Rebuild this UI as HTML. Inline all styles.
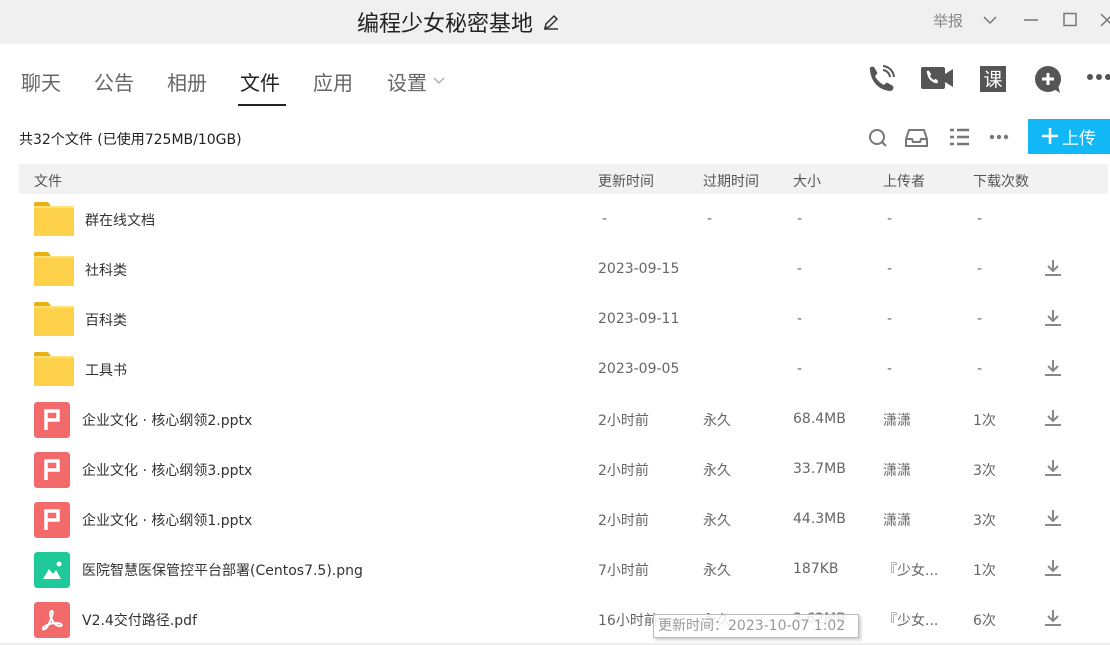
<!DOCTYPE html>
<html><head><meta charset="utf-8"><style>
*{margin:0;padding:0;box-sizing:border-box}
body{width:1110px;height:645px;overflow:hidden;background:#fff;font-family:"DejaVu Sans","Noto Sans CJK SC",sans-serif;position:relative;color:#333}
.a{position:absolute;white-space:nowrap}
.top{position:absolute;left:0;top:0;width:1110px;height:44px;background:#f0f0f0}
.tab{position:absolute;top:69px;font-size:20px;color:#666;font-family:"Noto Sans CJK SC",sans-serif;line-height:26px}
.hdr{position:absolute;left:19px;top:164px;width:1089px;height:30px;background:#f2f2f2;font-size:14px;color:#555}
.row{position:absolute;left:0;width:1110px;height:50px;font-size:14px;color:#333}
.row .c{position:absolute;top:17px;color:#666}
.fold{position:absolute;left:34px;top:8px;width:40px;height:34px}
.ic{position:absolute;left:34px;top:8px;width:36px;height:36px;border-radius:3px}
.dl{position:absolute;left:1044px;top:15px}
</style></head><body>
<div class="top"></div>
<div class="a" style="left:357px;top:7px;font-size:22px;color:#222;font-family:'Noto Sans CJK SC',sans-serif;line-height:30px">编程少女秘密基地</div>
<svg class="a" style="left:542px;top:13px" width="18" height="18" viewBox="0 0 18 18"><path d="M3 15 L4 11 L12 3 L15 6 L7 14 Z M2 16 H16" fill="none" stroke="#333" stroke-width="1.5"/></svg>
<div class="a" style="left:933px;top:10px;font-size:15px;color:#888;font-family:'Noto Sans CJK SC',sans-serif">举报</div>
<svg class="a" style="left:982px;top:12px" width="128" height="16" viewBox="0 0 128 16"><path d="M2 5 L8 11 L14 5" fill="none" stroke="#777" stroke-width="1.5"/><path d="M42 8 H56" stroke="#777" stroke-width="1.5"/><rect x="82" y="1.5" width="12" height="12" fill="none" stroke="#777" stroke-width="1.5"/><path d="M119 2 L131 14 M131 2 L119 14" stroke="#777" stroke-width="1.5"/></svg>

<div class="tab" style="left:21px">聊天</div>
<div class="tab" style="left:94px">公告</div>
<div class="tab" style="left:167px">相册</div>
<div class="tab" style="left:240px;color:#222">文件</div>
<div class="a" style="left:238px;top:104px;width:48px;height:2px;background:#222"></div>
<div class="tab" style="left:313px">应用</div>
<div class="tab" style="left:387px">设置</div>
<svg class="a" style="left:432px;top:76px" width="14" height="10"><path d="M2 2 L7 7 L12 2" fill="none" stroke="#aaa" stroke-width="1.3"/></svg>

<svg class="a" style="left:866px;top:64px" width="30" height="30" viewBox="0 0 30 30"><path d="M4 6 C3 3 6 2 8 3 L11 8 C12 10 10 11 9 12 C11 16 14 19 18 21 C19 20 20 18 22 19 L27 22 C28 24 27 27 24 27 C13 26 5 18 4 6Z" fill="#555"/><path d="M17 6 A8 8 0 0 1 24 13 M17 2 A12 12 0 0 1 28 13" fill="none" stroke="#555" stroke-width="2"/></svg>
<svg class="a" style="left:921px;top:66px" width="32" height="24" viewBox="0 0 32 24"><rect x="0" y="1" width="24" height="22" rx="2" fill="#555"/><path d="M24 8 L32 3 V21 L24 16Z" fill="#555"/><path d="M6 7 C5 5 7 4 8 5 L10 8 C10 9 9 10 9 10 C10 12 11 13 13 14 C13 14 14 13 15 13 L17 15 C17 17 16 18 14 17 C9 15 7 12 6 7Z" fill="#fff"/></svg>
<div class="a" style="left:980px;top:66px;width:26px;height:26px;background:#555;color:#fff;font-size:19px;line-height:26px;text-align:center;font-family:'Noto Sans CJK SC',sans-serif">课</div>
<svg class="a" style="left:1034px;top:65px" width="30" height="30" viewBox="0 0 30 30"><circle cx="14" cy="14" r="13" fill="#555"/><path d="M20 24 L26 28 L24 20Z" fill="#555"/><path d="M14 8 V20 M8 14 H20" stroke="#fff" stroke-width="3"/></svg>
<svg class="a" style="left:1086px;top:72px" width="24" height="10"><circle cx="4" cy="5" r="3" fill="#555"/><circle cx="13" cy="5" r="3" fill="#555"/><circle cx="22" cy="5" r="3" fill="#555"/></svg>

<div class="a" style="left:19px;top:129px;font-size:14px;color:#222">共32个文件 (已使用725MB/10GB)</div>
<svg class="a" style="left:866px;top:127px" width="150" height="22" viewBox="0 0 150 22"><circle cx="11" cy="10" r="7" fill="none" stroke="#777" stroke-width="2"/><path d="M16 15 L20 19" stroke="#777" stroke-width="2"/><path d="M43 3 H58 L61 12 V19 H40 V12 Z M40 12 H46 L47 15 H54 L55 12 H61" fill="none" stroke="#777" stroke-width="2"/><path d="M84 3 H88 M91 3 H103 M84 10 H88 M91 10 H103 M84 17 H88 M91 17 H103" stroke="#777" stroke-width="2.5"/><circle cx="126" cy="10" r="2.2" fill="#777"/><circle cx="133" cy="10" r="2.2" fill="#777"/><circle cx="140" cy="10" r="2.2" fill="#777"/></svg>
<div class="a" style="left:1028px;top:119px;width:82px;height:35px;background:#12b7f5"></div>
<svg class="a" style="left:1042px;top:128px" width="16" height="16"><path d="M8 0 V16 M0 8 H16" stroke="#fff" stroke-width="2.5"/></svg>
<div class="a" style="left:1062px;top:125px;font-size:17px;color:#fff;font-family:'Noto Sans CJK SC',sans-serif;line-height:24px">上传</div>

<div class="hdr">
<span class="a" style="left:15px;top:7px">文件</span>
<span class="a" style="left:579px;top:7px">更新时间</span>
<span class="a" style="left:684px;top:7px">过期时间</span>
<span class="a" style="left:774px;top:7px">大小</span>
<span class="a" style="left:864px;top:7px">上传者</span>
<span class="a" style="left:954px;top:7px">下载次数</span>
</div>

<svg width="0" height="0" style="position:absolute"><defs>
<symbol id="f" viewBox="0 0 40 34"><path d="M0 2 Q0 0 2 0 H14 L17 4 H0Z" fill="#e8b10f"/><rect x="0" y="4" width="40" height="30" fill="#fdd14a"/><rect x="0" y="4" width="40" height="2" fill="#fde07a"/></symbol>
<symbol id="d" viewBox="0 0 18 18"><path d="M9 1 V11 M4 7 L9 12 L14 7 M1 16 H17" fill="none" stroke="#888" stroke-width="2"/></symbol>
<symbol id="p" viewBox="0 0 36 36"><rect width="36" height="36" rx="3" fill="#f36a6a"/><path d="M12 28 V9 H24 V18 H12" fill="none" stroke="#fff" stroke-width="3.5"/></symbol>
</defs></svg>

<div class="row" style="top:194px"><svg class="fold" viewBox="0 0 40 34"><use href="#f"/></svg><span class="a" style="left:85px;top:16px">群在线文档</span><span class="c" style="left:602px">-</span><span class="c" style="left:707px">-</span><span class="c" style="left:797px">-</span><span class="c" style="left:887px">-</span><span class="c" style="left:977px">-</span></div>
<div class="row" style="top:244px"><svg class="fold" viewBox="0 0 40 34"><use href="#f"/></svg><span class="a" style="left:85px;top:16px">社科类</span><span class="c" style="left:598px">2023-09-15</span><span class="c" style="left:797px">-</span><span class="c" style="left:887px">-</span><span class="c" style="left:977px">-</span><svg class="dl" width="18" height="18"><use href="#d"/></svg></div>
<div class="row" style="top:294px"><svg class="fold" viewBox="0 0 40 34"><use href="#f"/></svg><span class="a" style="left:85px;top:16px">百科类</span><span class="c" style="left:598px">2023-09-11</span><span class="c" style="left:797px">-</span><span class="c" style="left:887px">-</span><span class="c" style="left:977px">-</span><svg class="dl" width="18" height="18"><use href="#d"/></svg></div>
<div class="row" style="top:344px"><svg class="fold" viewBox="0 0 40 34"><use href="#f"/></svg><span class="a" style="left:85px;top:16px">工具书</span><span class="c" style="left:598px">2023-09-05</span><span class="c" style="left:797px">-</span><span class="c" style="left:887px">-</span><span class="c" style="left:977px">-</span><svg class="dl" width="18" height="18"><use href="#d"/></svg></div>
<div class="row" style="top:394px"><svg class="ic" viewBox="0 0 36 36"><use href="#p"/></svg><span class="a" style="left:82px;top:16px">企业文化 · 核心纲领2.pptx</span><span class="c" style="left:598px;top:16px">2小时前</span><span class="c" style="left:703px;top:16px">永久</span><span class="c" style="left:793px">68.4MB</span><span class="c" style="left:883px;top:16px">潇潇</span><span class="c" style="left:973px;top:16px">1次</span><svg class="dl" width="18" height="18"><use href="#d"/></svg></div>
<div class="row" style="top:444px"><svg class="ic" viewBox="0 0 36 36"><use href="#p"/></svg><span class="a" style="left:82px;top:16px">企业文化 · 核心纲领3.pptx</span><span class="c" style="left:598px;top:16px">2小时前</span><span class="c" style="left:703px;top:16px">永久</span><span class="c" style="left:793px">33.7MB</span><span class="c" style="left:883px;top:16px">潇潇</span><span class="c" style="left:973px;top:16px">3次</span><svg class="dl" width="18" height="18"><use href="#d"/></svg></div>
<div class="row" style="top:494px"><svg class="ic" viewBox="0 0 36 36"><use href="#p"/></svg><span class="a" style="left:82px;top:16px">企业文化 · 核心纲领1.pptx</span><span class="c" style="left:598px;top:16px">2小时前</span><span class="c" style="left:703px;top:16px">永久</span><span class="c" style="left:793px">44.3MB</span><span class="c" style="left:883px;top:16px">潇潇</span><span class="c" style="left:973px;top:16px">3次</span><svg class="dl" width="18" height="18"><use href="#d"/></svg></div>
<div class="row" style="top:544px"><svg class="ic" viewBox="0 0 36 36"><rect width="36" height="36" rx="3" fill="#1fc99a"/><path d="M9 27 L15 17 L19 22 L22 18 L27 27Z" fill="#fff"/><circle cx="25" cy="12" r="2.5" fill="#fff"/></svg><span class="a" style="left:82px;top:16px">医院智慧医保管控平台部署(Centos7.5).png</span><span class="c" style="left:598px;top:16px">7小时前</span><span class="c" style="left:703px;top:16px">永久</span><span class="c" style="left:793px">187KB</span><span class="c" style="left:883px;top:16px">『少女...</span><span class="c" style="left:973px;top:16px">1次</span><svg class="dl" width="18" height="18"><use href="#d"/></svg></div>
<div class="row" style="top:594px"><svg class="ic" viewBox="0 0 36 36"><rect width="36" height="36" rx="3" fill="#f36a6a"/><path d="M18 9 C15 9 16 14 18 18 C20 22 24 25 27 24 C29 23 27 21 22 21 C16 21 10 24 9 26 C8 28 11 28 13 25 C15 22 17 17 18 14 C19 11 19 9 18 9Z" fill="none" stroke="#fff" stroke-width="2"/></svg><span class="a" style="left:82px;top:16px">V2.4交付路径.pdf</span><span class="c" style="left:598px;top:16px">16小时前</span><span class="c" style="left:703px;top:16px">永久</span><span class="c" style="left:793px">3.62MB</span><span class="c" style="left:883px;top:16px">『少女...</span><span class="c" style="left:973px;top:16px">6次</span><svg class="dl" width="18" height="18"><use href="#d"/></svg></div>
<div class="a" style="left:0;top:643px;width:1110px;height:2px;background:#eee"></div>
<div class="a" style="left:653px;top:614px;width:206px;height:24px;background:rgba(255,255,255,0.85);border:1px solid #bbb;box-shadow:2px 2px 3px rgba(0,0,0,.2);font-size:14px;color:#999;line-height:22px;padding-left:4px">更新时间：2023-10-07 1:02</div>
</body></html>
